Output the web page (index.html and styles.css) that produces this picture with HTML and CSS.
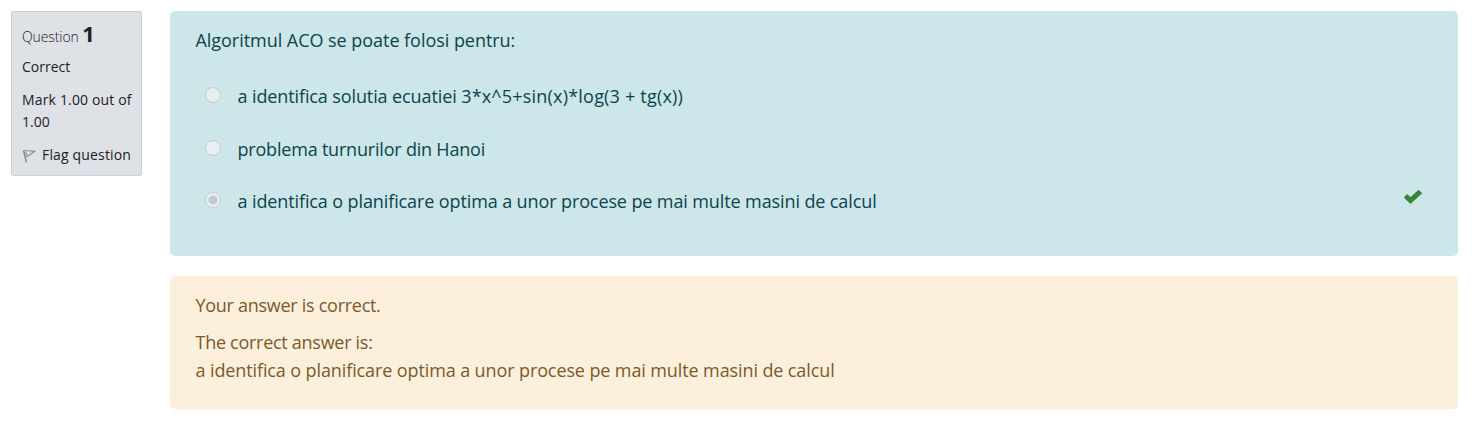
FILE: index.html
```html
<!DOCTYPE html>
<html lang="ro">
<head>
<meta charset="utf-8">
<title>Question 1</title>
<link rel="stylesheet" href="styles.css">
</head>
<body>
<main class="question">
  <aside class="info">
    <h3 class="number"><span class="t label">Question</span> <b class="t digit">1</b></h3>
    <div class="state"><span class="t">Correct</span></div>
    <div class="grade"><span class="t g1">Mark 1.00 out of</span><br><span class="t g2">1.00</span></div>
    <div class="flag"><svg class="flag-icon" viewBox="0 0 14 14"><g fill="none" stroke="#8b8d8f"><path d="M1.500 1.500 L4.500 13.500" stroke-width="1.500"/><path d="M1.500 1.500 L12.500 2.300 L4.500 8 M3.500 3 L5 6.500" stroke-width="1.100"/></g></svg><span class="t f1">Flag question</span></div>
  </aside>
  <section class="content">
    <div class="formulation">
      <p class="qtext"><span class="t q0">Algoritmul ACO se poate folosi pentru:</span></p>
      <div class="answers">
        <div class="answer"><i class="radio"></i><span class="t a1">a identifica solutia ecuatiei <span class="formula">3*x^5+sin(x)*log(3 + tg(x))</span></span></div>
        <div class="answer"><i class="radio"></i><span class="t a2">problema turnurilor din Hanoi</span></div>
        <div class="answer"><i class="radio checked"></i><span class="t a3">a identifica o planificare optima a unor procese pe mai multe masini de calcul</span>
          <svg class="check" viewBox="0 0 18 14"><path d="M0.800 7.500 L3.200 5 L6.500 8 L14.500 0.800 L17.200 3.200 L6.500 13 Z" fill="#36863a" stroke="#36863a" stroke-width="1.400" stroke-linejoin="round"/></svg></div>
      </div>
    </div>
    <div class="outcome">
      <p class="feedback"><span class="t o1">Your answer is correct.</span></p>
      <p class="right"><span class="t o2">The correct answer is:</span><br><span class="t o3">a identifica o planificare optima a unor procese pe mai multe masini de calcul</span></p>
    </div>
  </section>
</main>
</body>
</html>
```
FILE: styles.css
```css
* { box-sizing: border-box; }
body { margin: 0; background: #fff; font-family: "Open Sans", "Noto Sans", sans-serif; font-size: 18px; font-weight: 370; }
p, h3 { margin: 0; }
.t { white-space: nowrap; }
.question { display: flex; gap: 28px; padding: 11px 24px 0 11px; }
.info { width: 131px; height: 165px; flex: none; padding: 8px 0 0 10px; background: #dee2e6; border: 1px solid #caced6; border-radius: 2px; font-size: 14px; line-height: 22px; color: #1d2125; }
.number { font-size: 14px; font-weight: 300; line-height: 28px; height: 28px; letter-spacing: -0.1px; }
.digit { font-size: 22px; font-weight: 700; line-height: 26px; }
.state { margin-top: 8px; }
.grade { margin-top: 11px; }
.g1, .f1 { letter-spacing: 0.16px; }
.flag { display: flex; align-items: center; gap: 6px; margin-top: 11px; }
.flag-icon { width: 14px; height: 14px; flex: none; margin-top: 2px; }
.content { flex: 1; min-width: 0; }
.formulation { height: 245px; padding: 15px 26px 0 25.500px; background: #cde6ea; border-radius: 5px; color: #0b444c; line-height: 28px; }
.q0 { letter-spacing: -0.04px; }
.a1, .a3, .o3 { letter-spacing: -0.11px; }
.a2 { letter-spacing: -0.2px; }
.a1 .formula { letter-spacing: 0.2px; }
.o1, .o2 { letter-spacing: -0.28px; }
.answers { margin-top: 28px; padding-left: 9.500px; display: grid; gap: 24.500px; }
.answer { display: flex; align-items: center; height: 28px; }
.radio { width: 16px; height: 16px; margin: -2px 16.500px 0 0; border: 1px solid #c3cccd; border-radius: 50%; background: #e8eff0; flex: none; }
.checked { background: radial-gradient(circle, #c3c9ca 0 4px, #e8eff0 5px); }
.check { width: 18px; height: 14px; margin: -8px 10px 0 auto; }
.outcome { height: 133px; margin-top: 20px; padding: 15px 26px 0 25.500px; background: #fcefdc; border-radius: 5px; color: #7d5a29; line-height: 28px; }
.right { margin-top: 9px; }
```
